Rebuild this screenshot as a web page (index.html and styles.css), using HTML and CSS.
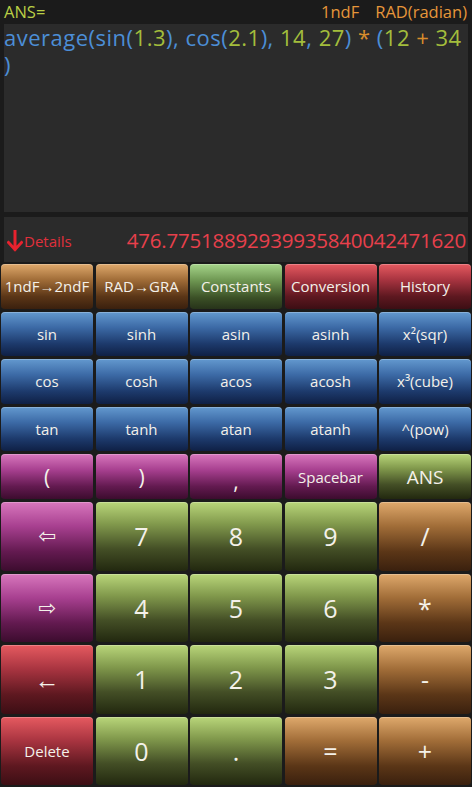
FILE: index.html
```html
<!DOCTYPE html>
<html>
<head>
<meta charset="utf-8">
<link rel="stylesheet" href="styles.css">
</head>
<body>
<div class="app">
  <div class="topline">
    <span class="ans-label">ANS=</span>
    <span class="modes"><span>1ndF</span><span>RAD(radian)</span></span>
  </div>
  <div class="display">
    <div class="expr"><span class="b">average(sin(</span><span class="n">1.3</span><span class="b">), cos(</span><span class="n">2.1</span><span class="b">), </span><span class="n">14</span><span class="b">, </span><span class="n">27</span><span class="b">) </span><span class="o">*</span><span class="b"> (</span><span class="n">12</span> <span class="o">+</span> <span class="n">34</span><br><span class="b">)</span></div>
  </div>
  <div class="result">
    <span class="details"><svg class="down" width="16" height="22" viewBox="0 0 16 22"><path d="M8 1 V19 M1.5 12.5 L8 19.5 L14.5 12.5" fill="none" stroke="#e8222e" stroke-width="3" stroke-linecap="square"/></svg>Details</span>
    <span class="value">476.77518892939935840042471620</span>
  </div>
  <div class="keys">
    <button class="k orange">1ndF→2ndF</button>
    <button class="k orange">RAD→GRA</button>
    <button class="k green">Constants</button>
    <button class="k red">Conversion</button>
    <button class="k red">History</button>

    <button class="k blue">sin</button>
    <button class="k blue">sinh</button>
    <button class="k blue">asin</button>
    <button class="k blue">asinh</button>
    <button class="k blue">x²(sqr)</button>

    <button class="k blue">cos</button>
    <button class="k blue">cosh</button>
    <button class="k blue">acos</button>
    <button class="k blue">acosh</button>
    <button class="k blue">x³(cube)</button>

    <button class="k blue">tan</button>
    <button class="k blue">tanh</button>
    <button class="k blue">atan</button>
    <button class="k blue">atanh</button>
    <button class="k blue">^(pow)</button>

    <button class="k pink big">(</button>
    <button class="k pink big">)</button>
    <button class="k pink big comma">,</button>
    <button class="k pink">Spacebar</button>
    <button class="k lime ansk">ANS</button>

    <button class="k pink arrow">⇦</button>
    <button class="k lime num">7</button>
    <button class="k lime num">8</button>
    <button class="k lime num">9</button>
    <button class="k orange num">/</button>

    <button class="k pink arrow">⇨</button>
    <button class="k lime num">4</button>
    <button class="k lime num">5</button>
    <button class="k lime num">6</button>
    <button class="k orange num">*</button>

    <button class="k red num">←</button>
    <button class="k lime num">1</button>
    <button class="k lime num">2</button>
    <button class="k lime num">3</button>
    <button class="k orange num">-</button>

    <button class="k red">Delete</button>
    <button class="k lime num">0</button>
    <button class="k lime num">.</button>
    <button class="k orange num">=</button>
    <button class="k orange num">+</button>
  </div>
</div>
</body>
</html>
```

FILE: styles.css
```css
html, body {
  margin: 0;
  padding: 0;
  background: #1b1b1b;
}
.app {
  width: 472px;
  height: 787px;
  overflow: hidden;
  font-family: "Open Sans", "Noto Sans", sans-serif;
  background: #1b1b1b;
}
.topline {
  height: 24px;
  display: flex;
  align-items: center;
  justify-content: space-between;
  padding: 0 5px 0 4px;
  font-size: 16.5px;
  line-height: 24px;
}
.ans-label { color: #b9cf45; }
.modes { color: #e6963a; display: flex; gap: 16px; }
.display {
  margin: 0 4px;
  height: 188px;
  background: #2b2b2b;
}
.expr {
  font-size: 22px;
  line-height: 27px;
  white-space: nowrap;
  letter-spacing: 0.5px;
}
.expr .b { color: #4c8ed6; }
.expr .n { color: #a3bd3c; }
.expr .o { color: #d98c2c; }
.result {
  margin: 5px 4px 0 4px;
  height: 45px;
  background: #2b2b2b;
  display: flex;
  align-items: center;
  justify-content: space-between;
  padding: 0 2px 0 3px;
}
.details {
  color: #e0303c;
  font-size: 15px;
  display: flex;
  align-items: center;
  margin-top: 2px;
}
.down { margin-right: 1px; }
.value {
  color: #e8404c;
  font-size: 20.5px;
  letter-spacing: -0.2px;
}
.keys {
  margin-top: 2px;
  padding: 0 1px 0 1px;
  display: grid;
  grid-template-columns: repeat(5, 1fr);
  grid-template-rows: repeat(5, 44.6px) repeat(4, 68.6px);
  column-gap: 2.5px;
  row-gap: 3px;
}
.k {
  border: none;
  margin: 0;
  padding: 0;
  border-radius: 4px;
  color: #f4f1ea;
  font-family: "Open Sans", "Noto Sans", sans-serif;
  font-size: 15px;
  display: flex;
  align-items: center;
  justify-content: center;
  box-shadow: inset 0 1px 0 rgba(255,255,255,0.25);
}
.orange { background: linear-gradient(to bottom, #dfa96c 0%, #a16d38 35%, #5b3617 72%, #3a200e 100%); }
.green  { background: linear-gradient(to bottom, #a6d58a 0%, #6c9450 38%, #3b5026 75%, #27331a 100%); }
.red    { background: linear-gradient(to bottom, #e65a60 0%, #a83440 35%, #5e1820 72%, #3c0e14 100%); }
.blue   { background: linear-gradient(to bottom, #6399cf 0%, #3c6aa6 35%, #1d3a6c 72%, #0f2045 100%); }
.pink   { background: linear-gradient(to bottom, #d877bd 0%, #a84090 35%, #631a50 72%, #3c0c2e 100%); }
.lime   { background: linear-gradient(to bottom, #b9d67a 0%, #81994c 32%, #444f26 68%, #22280f 100%); }
.big { font-size: 21px; }
.comma { padding-top: 8px; }
.ansk { font-size: 19px; }
.num { font-size: 25px; }
.arrow { font-family: "DejaVu Sans", sans-serif; font-size: 21px; }
```
